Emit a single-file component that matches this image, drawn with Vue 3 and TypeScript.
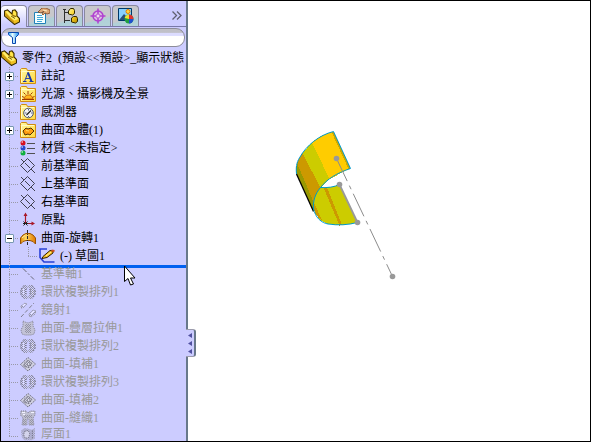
<script setup lang="ts">
import { ref } from 'vue'

interface TreeItem {
  icon: string
  label: string
  toggle?: '+' | '-'
  child?: boolean
}

const filterText = ref('')

const tabs = [
  { id: 'part', label: '特徵管理員' },
  { id: 'props', label: '屬性管理員' },
  { id: 'config', label: '模型組態管理員' },
  { id: 'target', label: '尺寸管理員' },
  { id: 'display', label: '顯示管理員' },
]
const activeTab = ref('part')

const items: TreeItem[] = [
  { icon: 'note', label: '註記', toggle: '+' },
  { icon: 'light', label: '光源、攝影機及全景', toggle: '+' },
  { icon: 'sensor', label: '感測器' },
  { icon: 'body', label: '曲面本體(1)', toggle: '+' },
  { icon: 'material', label: '材質 <未指定>' },
  { icon: 'plane', label: '前基準面' },
  { icon: 'plane', label: '上基準面' },
  { icon: 'plane', label: '右基準面' },
  { icon: 'origin', label: '原點' },
  { icon: 'revolve', label: '曲面-旋轉1', toggle: '-' },
  { icon: 'sketch', label: '(-) 草圖1', child: true },
]

const rolledBack: TreeItem[] = [
  { icon: 'axis', label: '基準軸1' },
  { icon: 'circular', label: '環狀複製排列1' },
  { icon: 'mirror', label: '鏡射1' },
  { icon: 'loft', label: '曲面-疊層拉伸1' },
  { icon: 'circular', label: '環狀複製排列2' },
  { icon: 'fill', label: '曲面-填補1' },
  { icon: 'circular', label: '環狀複製排列3' },
  { icon: 'fill', label: '曲面-填補2' },
  { icon: 'knit', label: '曲面-縫織1' },
  { icon: 'thicken', label: '厚面1' },
]
</script>

<template>
  <div class="app">
    <svg class="defs" aria-hidden="true">
      <defs>
        <linearGradient id="gold" x1="0" y1="0" x2="1" y2="1">
          <stop offset="0" stop-color="#fff6a0" />
          <stop offset="0.5" stop-color="#f8d020" />
          <stop offset="1" stop-color="#b88a00" />
        </linearGradient>
        <linearGradient id="paper" x1="0" y1="0" x2="1" y2="1">
          <stop offset="0" stop-color="#fff8a0" />
          <stop offset="1" stop-color="#ffd840" />
        </linearGradient>
        <linearGradient id="arch" x1="0" y1="0" x2="1" y2="0">
          <stop offset="0" stop-color="#e08800" />
          <stop offset="0.35" stop-color="#ffd860" />
          <stop offset="1" stop-color="#e07800" />
        </linearGradient>
        <linearGradient id="funnel" x1="0" y1="0" x2="1" y2="0">
          <stop offset="0" stop-color="#38b8f8" />
          <stop offset="0.4" stop-color="#e8fcff" />
          <stop offset="1" stop-color="#1890f0" />
        </linearGradient>
        <pattern id="dither" width="2" height="2" patternUnits="userSpaceOnUse">
          <path d="M0 0h1v1H0zM1 1h1v1H1z" fill="#9494a4" />
        </pattern>
        <symbol id="i-folder" viewBox="0 0 16 16">
          <path d="M.5 3.500V15.500H15.500V2.500H7.500L6.500.5H1.500L.5 1.500z" fill="url(#paper)" stroke="#d08c10" />
          <path d="M1.500 14.500V3.500H14" fill="none" stroke="#fffbc8" />
        </symbol>
        <symbol id="i-part" viewBox="0 0 16 16">
          <path d="M.5 2 3.500.8 8 5 8.500 1.500 11 .8 13 3.500 13 7 15.500 9.500V13L10.500 15.500.5 7z" fill="#f0c020" stroke="#382c00" stroke-width="1.100" />
          <path d="M1.500 2.500 3.500 2 9 7.500 13 8 14.500 10 10.500 11.500 7 9z" fill="#fff070" />
          <path d="M9 2.500 10.500 2 12 4V7L9.500 6z" fill="#ffe850" />
          <path d="M1.300 4 10 12.500V14.500L1.300 7z" fill="#c89810" />
          <path d="M7 7l4 2.500M8.500 6.500 12 7.500" stroke="#685000" stroke-width=".9" />
        </symbol>
        <symbol id="i-props" viewBox="0 0 16 16">
          <path d="M.5 4.500h11v11H.5z" fill="#f4ffff" stroke="#2080b8" />
          <path d="M3 7.500h5M3 9.500h6M3 11.500h6M3 13.500h5" stroke="#40a8d8" />
          <path d="M4 4 8 0h4l4 2v3l-3 1-2-1-2 2-1-1 2-3-3 2z" fill="#dca878" stroke="#804820" stroke-width=".8" />
          <path d="M9 2l4 1" stroke="#fff0c0" />
        </symbol>
        <symbol id="i-config" viewBox="0 0 16 16">
          <path d="M2.500 1v14M3 4.500h5M3 12.500h5M1 1.500h3" fill="none" stroke="#303030" />
          <path d="M6.500 3l2-2.500h3l1 2v3l-2 1.500-4-1zM9.500 10l2-1.500h3l1 2v3l-2 1.500-4-1z" fill="url(#gold)" stroke="#302800" />
        </symbol>
        <symbol id="i-target" viewBox="0 0 16 16">
          <circle cx="8" cy="8" r="5" fill="#dcb8e4" stroke="#b040d0" stroke-width="1.500" />
          <path d="M8 .5v15M.5 8h15" stroke="#b040d0" stroke-width="1.500" />
          <circle cx="8" cy="8" r="2" fill="#f4d8f4" stroke="#b860d0" />
        </symbol>
        <symbol id="i-display" viewBox="0 0 16 16">
          <path d="M.5.5h13v12H.5z" fill="#88d0ff" stroke="#003868" />
          <path d="M1 12l5-6 6 6z" fill="#285078" />
          <circle cx="10" cy="3.500" r="2" fill="#ffd840" stroke="#e88000" />
          <circle cx="11" cy="11" r="4.500" fill="#20a040" />
          <path d="M11 11V6.500a4.500 4.500 0 0 1 4.500 4.500z" fill="#e03030" />
          <path d="M11 11h4.500a4.500 4.500 0 0 1-4.500 4.500z" fill="#2050d0" />
          <path d="M11 11V6.500a4.500 4.500 0 0 0-4.300 3.500z" fill="#f0e030" />
        </symbol>
        <symbol id="i-note" viewBox="0 0 16 16">
          <use href="#i-folder" />
          <path d="M4.500 13.500 8 4.500 11.500 13.500M5.500 10.500h5" fill="none" stroke="#3048a0" />
          <path d="M8 4.500l3.500 9" stroke="#1838a8" stroke-width="2" />
          <path d="M3 13.500h3.500M9.500 13.500h4" stroke="#1838a8" />
        </symbol>
        <symbol id="i-light" viewBox="0 0 16 16">
          <use href="#i-folder" />
          <path d="M4 13l1-2.500 2-1.500h3l2 1.500 1 2.500z" fill="#ffb820" stroke="#c05000" stroke-width=".8" />
          <path d="M2 10.500l2 .8M3.500 6.500l2 2M8 5v3M12.500 6.500l-2 2M14.500 10.500l-2 .8M2 13.500h12" stroke="#a03800" />
        </symbol>
        <symbol id="i-sensor" viewBox="0 0 16 16">
          <use href="#i-folder" />
          <circle cx="8.500" cy="9" r="4.800" fill="#f4f4f4" stroke="#505868" />
          <path d="M6.500 11 11 6.500" stroke="#202020" stroke-width="1.200" />
          <path d="M8.500 5v1.500M5 9h1.500M11 9h1.500M8.500 12v1" stroke="#506090" />
        </symbol>
        <symbol id="i-body" viewBox="0 0 16 16">
          <use href="#i-folder" />
          <path d="M3 9l3-3 2 1 3-1 3 3-4 4-2-1-3 1z" fill="#ff9c10" stroke="#503000" />
          <path d="M6 8.500l3 .5" stroke="#ffdc60" />
        </symbol>
        <symbol id="i-material" viewBox="0 0 16 16">
          <path d="M7 3.500h8M7 8.500h8M7 13.500h8" stroke="#505050" stroke-width="1.200" />
          <circle cx="3" cy="3" r="2.500" fill="#d81020" />
          <circle cx="3" cy="8" r="2.500" fill="#2848d0" />
          <circle cx="3" cy="13" r="2.500" fill="#10b040" />
          <path d="M1.500 2h1.500M1.500 7h1.500M1.500 12h1.500" stroke="#fff" />
        </symbol>
        <symbol id="i-plane" viewBox="0 0 16 16">
          <path d="M.5 7.500 7.500.5 14.500 7.500 7.500 14.500zM1 1l3 3M5 5l5 5M11 11l4 4" fill="none" stroke="#30303c" stroke-width=".9" />
        </symbol>
        <symbol id="i-origin" viewBox="0 0 16 16">
          <path d="M5.500 12V2M6 11.500h7" stroke="#a81828" stroke-width="1.200" />
          <path d="M3.500 4 5.500.5 7.500 4zM11.500 9.500l3.500 2-3.500 2z" fill="#a81828" />
          <path d="M3.500 9.500l4 4M7.500 9.500l-4 4M3 11.500h5" stroke="#202020" />
        </symbol>
        <symbol id="i-revolve" viewBox="0 0 16 16">
          <path d="M.5 14V8L3 5l3-1.500h4L13 5l2.500 3v6L13 11.500 10 10.500H6L3 11.500z" fill="url(#arch)" stroke="#985000" />
          <path d="M7.500 0v15" stroke="#282828" stroke-dasharray="3 1 1 1" />
          <path d="M2 8l3-2.500" stroke="#fff0a0" />
        </symbol>
        <symbol id="i-sketch" viewBox="0 0 16 16">
          <path d="M8 1H1v8.500L5 14h10.500" fill="none" stroke="#2840d8" stroke-width="1.600" />
          <path d="M4 8.500 11 2.500 14 3v2L8 9.500 3 10.500z" fill="#f8c020" stroke="#302000" />
          <path d="M7 8l5-4" stroke="#fff0a0" />
          <path d="M12.500 2.500l3 .5" stroke="#d05020" stroke-width="2" />
        </symbol>
        <symbol id="i-axis" viewBox="0 0 16 16">
          <path d="M3 2.500 14 13.500" stroke="#686878" stroke-dasharray="5 2 2 2" />
        </symbol>
        <symbol id="i-circular" viewBox="0 0 16 16">
          <path d="M4 1h3l1 2-2 3v4l2 3-1 2H4L1 11l-1-3 1-3zM9 1h3l3 4 1 3-1 3-3 4H9l-1-2 2-3V6L8 3z" fill="url(#dither)" />
          <path d="M4 1.500 1 5v6l3 3.500M12 1.500 15 5v6l-3 3.500" fill="none" stroke="#686876" stroke-dasharray="1.400 1.600" />
          <path d="M6 5v6M10 5v6" stroke="#5c5c6a" stroke-dasharray="1 1" />
          <path d="M3.500 5v6M12.500 5v6" stroke="#e4e4fa" stroke-dasharray="1 1" />
        </symbol>
        <symbol id="i-mirror" viewBox="0 0 16 16">
          <path d="M1 4l4-3 2 1-4 4H1zM9 12l4-4 3 1-1 3-4 3-2-1z" fill="url(#dither)" stroke="#9898a6" stroke-dasharray="1 1" />
          <path d="M1 15 14 1" stroke="#808090" stroke-dasharray="4 2" />
          <path d="M3 4l2-2M11 12l3-3" stroke="#f0f0ff" />
        </symbol>
        <symbol id="i-loft" viewBox="0 0 16 16">
          <path d="M3 1l2 1 3 1 3-1 2-1v5l2 4-1 4-3 1H5l-3-1-1-4 2-4z" fill="#c2c2d6" stroke="#808090" stroke-dasharray="1 1" />
          <path d="M5 4h6v9H5z" fill="url(#dither)" />
        </symbol>
        <symbol id="i-fill" viewBox="0 0 16 16">
          <path d="M.5 8.500 8 1.500 15.500 8 8 15z" fill="#cfcfe0" stroke="#666674" stroke-dasharray="1.500 1" />
          <path d="M4 7.500 8 4l4 3.500-3 4-5-1z" fill="url(#dither)" stroke="#757583" stroke-dasharray="2 1" />
          <path d="M7 8l2-2 1 2-1 2z" fill="#dddded" stroke="#686876" stroke-width=".6" />
        </symbol>
        <symbol id="i-knit" viewBox="0 0 16 16">
          <path d="M1 1h5l2 2 2-2h5v4l-2 3 1 7H9V9H7v6H2L3 8 .5 5z" fill="#bebed0" stroke="#808090" stroke-dasharray="1 1" />
          <path d="M4 5h8v3H4zM3 9h3v6H3zM10 9h3v6h-3z" fill="url(#dither)" />
          <path d="M2 2.500h3M3 4.500h2M11 2.500h3" stroke="#f2f2ff" />
        </symbol>
        <symbol id="i-thicken" viewBox="0 0 16 16">
          <path d="M0 4l4-3 5 1 3 1 4-2v12l-4 2H4L1 12z" fill="url(#dither)" />
          <path d="M4 5l4-1 2 3-1 5-4 1-2-4zM13 4v10" fill="#d4d4ec" stroke="#6c6c7a" stroke-dasharray="1.500 1" />
        </symbol>
      </defs>
    </svg>

    <aside class="panel">
      <nav class="tabs">
        <button
          v-for="tab in tabs"
          :key="tab.id"
          type="button"
          class="tab"
          :class="{ active: tab.id === activeTab }"
          :aria-label="tab.label"
          @click="activeTab = tab.id"
        >
          <svg class="icon"><use :href="'#i-' + tab.id" /></svg>
        </button>
        <button type="button" class="more" aria-label="更多">
          <svg width="10" height="9" viewBox="0 0 10 9">
            <path d="M.5.5 4.500 4.500 .5 8.500M5 .5 9 4.500 5 8.500" fill="none" stroke="#606070" stroke-width="1.300" />
          </svg>
        </button>
      </nav>

      <label class="filter">
        <svg width="11" height="12" viewBox="0 0 11 12">
          <path d="M.5.5h10v2l-3 3v6h-3v-6l-4-3z" fill="url(#funnel)" stroke="#0848b0" />
        </svg>
        <input v-model="filterText" type="text" aria-label="篩選" />
      </label>

      <div class="root">
        <svg class="icon"><use href="#i-part" /></svg>
        <span>零件2&nbsp; (預設&lt;&lt;預設&gt;_顯示狀態</span>
      </div>

      <ul class="tree">
        <li v-for="item in items" :key="item.label" class="row" :class="{ child: item.child }">
          <span class="branch">
            <button v-if="item.toggle" type="button" class="toggle" :class="{ open: item.toggle === '-' }" :aria-label="item.label"></button>
          </span>
          <svg class="icon"><use :href="'#i-' + item.icon" /></svg>
          <span class="label">{{ item.label }}</span>
        </li>
        <li class="rollback" aria-hidden="true"></li>
        <li v-for="item in rolledBack" :key="item.label" class="row off">
          <span class="branch"></span>
          <svg class="icon"><use :href="'#i-' + item.icon" /></svg>
          <span class="label">{{ item.label }}</span>
        </li>
      </ul>

      <svg class="cursor" width="13" height="21" viewBox="0 0 13 21">
        <path d="M1.500 1v15.500l3.500-3L7.500 20l3-1-3-6h4.500z" fill="#fff" stroke="#000" />
      </svg>
      <button type="button" class="collapse" aria-label="收合">
        <svg width="4" height="21" viewBox="0 0 4 21">
          <path d="M4 0v5L0 2.500zM4 8v5L0 10.500zM4 16v5L0 18.500z" fill="#5050a0" />
        </svg>
      </button>
    </aside>

    <main class="view">
      <svg class="model" viewBox="188 1 402 440" preserveAspectRatio="xMinYMin meet">
        <g shape-rendering="crispEdges">
          <path d="M333.500 131.500C323 134 317 138 312 142.500L329.500 179.500 343 172 350.500 168.500z" fill="#ffcc00" />
          <path d="M331.500 132 333.500 131.500 350.500 168.500 348.500 169z" fill="#cca800" />
          <path d="M312 142.500 302.500 153 320.500 188 329.500 179z" fill="#cccc00" />
          <path d="M302.500 153C298 159 296 164 296 172L313.500 211C313 201 315 195 320.500 188z" fill="#cc9900" />
          <path d="M297 163C296 166 296 170 296 173L313.500 211 313.500 202z" fill="#999900" />
          <path d="M320.500 187.500C328 188 334 187 339.500 184.500L357.500 222.500C348 225 338 225.500 328 224 318 221 313 211 313.500 205 314 197 317 191 320.500 187.500z" fill="#cccc00" />
          <path d="M323.500 187.500 327 187.500 342 225 339.500 225.500z" fill="#cc9900" />
          <path d="M313.500 202 322 220C316 217 313 211 313.500 202z" fill="#cc9900" />
        </g>
        <path d="M296.500 174 313.500 211.500" stroke="#000" stroke-width="1.300" />
        <path
          d="M333.500 131.500C319 135 306 146 300 157 296 163 296 168 296.500 174M333.500 131.500 350.500 168.500C337 173 327 179 320.500 187.500 315 194 313 201 313.500 208 315 218 322 223 328 224 338 225.500 348 225 357.500 222.500M320.500 187.500C328 188 334 187 339.500 184.500"
          fill="none" stroke="#0099cc"
        />
        <path d="M339.500 184.500 357.500 222.500" stroke="#999" stroke-width="1.800" />
        <path d="M336.500 158.500 392.500 276.500" stroke="#8c8c8c" stroke-dasharray="25 5 4 5" />
        <g fill="#999">
          <circle cx="336.500" cy="158.500" r="2.800" />
          <circle cx="339.500" cy="184.500" r="2.800" />
          <circle cx="357.500" cy="222.500" r="2.800" />
          <circle cx="392.500" cy="276.500" r="2.800" />
        </g>
      </svg>
    </main>
  </div>
</template>

<style>
body {
  overflow: hidden;
}
</style>

<style scoped>
.app {
  display: flex;
  box-sizing: border-box;
  height: 100vh;
  border: 1px solid #000;
  background: #fff;
  font: 12px/18px "Liberation Serif", "Noto Sans CJK TC", serif;
  color: #000;
}
.defs {
  position: absolute;
  width: 0;
  height: 0;
}
button {
  padding: 0;
  border: 0;
  background: none;
}
.icon {
  flex: none;
  width: 16px;
  height: 16px;
}
.panel {
  position: relative;
  flex: none;
  display: flex;
  flex-direction: column;
  box-sizing: border-box;
  width: 187px;
  border-right: 2px solid #68788a;
  background: #ccccff;
}
.tabs {
  flex: none;
  display: flex;
  gap: 1px;
  height: 21px;
  padding-top: 4px;
  border-bottom: 1px solid #7878a8;
}
.tab {
  display: flex;
  align-items: center;
  justify-content: center;
  box-sizing: border-box;
  width: 27px;
  border: 1px solid #8888a0;
  border-bottom: 0;
  border-radius: 4px 4px 0 0;
  background: linear-gradient(165deg, #c8c8cc 60%, #b0d0d8 70%, #b4d4d8);
}
.tab.active {
  justify-content: flex-start;
  width: 26px;
  margin-bottom: -1px;
  padding-left: 3px;
  border-left: 0;
  background: linear-gradient(#fff, #ccccff 90%);
}
.more {
  margin-left: auto;
  padding-right: 4px;
}
.filter {
  flex: none;
  display: flex;
  align-items: center;
  gap: 4px;
  box-sizing: border-box;
  height: 19px;
  margin: 1px 1px 2px 0;
  padding-left: 6px;
  border: 1px solid #8c8c98;
  border-radius: 9px;
  background: linear-gradient(#c0c0c8 20%, #dcdcff 25%, #dcdcff 38%, #fff 42%);
}
.filter input {
  flex: 1;
  min-width: 0;
  padding: 0;
  border: 0;
  outline: 0;
  background: none;
  font: inherit;
}
.root {
  flex: none;
  display: flex;
  align-items: center;
  gap: 5px;
  height: 18px;
  white-space: nowrap;
}
.tree {
  flex: 1;
  min-height: 0;
  margin: 0;
  padding: 0;
  list-style: none;
}
.row {
  display: flex;
  align-items: center;
  height: 18px;
  white-space: nowrap;
  background: repeating-linear-gradient(#9999a8 0 1px, transparent 1px 2px) 8px 0 / 1px 100% no-repeat;
}
.row:last-child {
  height: 14px;
  line-height: 14px;
  align-items: flex-start;
  background-size: 1px 10px;
}
.branch {
  flex: none;
  display: flex;
  align-items: center;
  box-sizing: border-box;
  width: 19px;
  height: 18px;
  padding-left: 4px;
  background: repeating-linear-gradient(90deg, #9999a8 0 1px, transparent 1px 2px) 8px 9px / 10px 1px no-repeat;
}
.row:last-child .branch,
.row:last-child .icon {
  height: 14px;
}
.child .branch {
  width: 38px;
  background:
    repeating-linear-gradient(90deg, #9999a8 0 1px, transparent 1px 2px) 27px 9px / 10px 1px no-repeat,
    repeating-linear-gradient(#9999a8 0 1px, transparent 1px 2px) 27px 0 / 1px 9px no-repeat;
}
.label {
  padding-left: 5px;
}
.toggle {
  box-sizing: border-box;
  width: 9px;
  height: 9px;
  border: 1px solid #7898b0;
  border-radius: 1px;
  background:
    linear-gradient(#000, #000) center / 5px 1px no-repeat,
    linear-gradient(#000, #000) center / 1px 5px no-repeat,
    #fff;
}
.toggle.open {
  background: linear-gradient(#000, #000) center / 5px 1px no-repeat, #fff;
}
.off {
  color: #999;
}
.rollback {
  height: 3px;
  margin-bottom: -3px;
  background: #0060f0;
}
.cursor {
  position: absolute;
  left: 122px;
  top: 264px;
}
.collapse {
  position: absolute;
  left: 185px;
  top: 328px;
  display: flex;
  align-items: center;
  justify-content: center;
  box-sizing: border-box;
  width: 10px;
  height: 28px;
  border: 1px solid #9c9cac;
  border-left: 0;
  border-right: 2px solid #68788a;
  border-radius: 0 3px 3px 0;
  background: #ccccff;
}
.view {
  flex: 1;
  min-width: 0;
}
.model {
  display: block;
  width: 100%;
  height: 100%;
}
</style>
